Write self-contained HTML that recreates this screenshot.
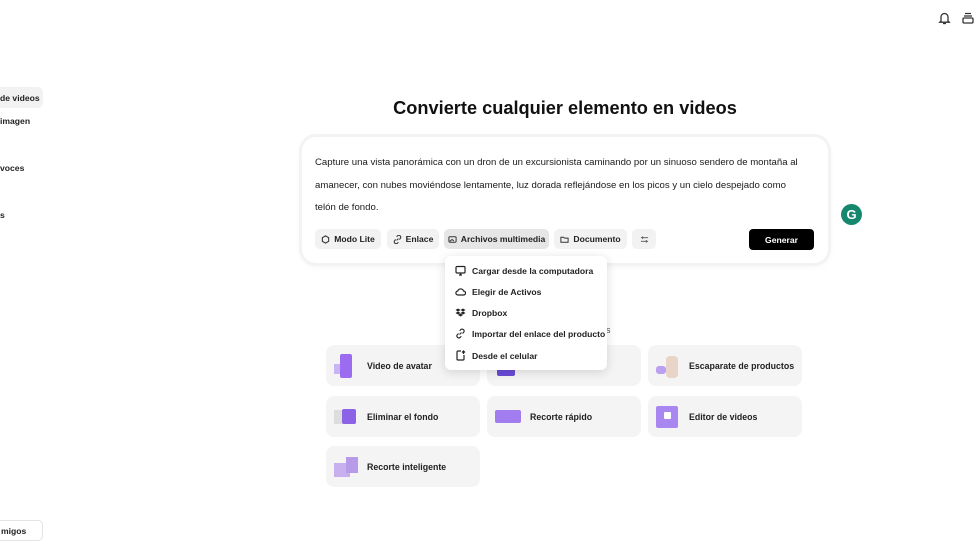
<!DOCTYPE html>
<html><head><meta charset="utf-8"><style>
*{margin:0;padding:0;box-sizing:border-box}
body{width:980px;height:552px;overflow:hidden;background:#fff;font-family:"Liberation Sans",sans-serif;color:#111;position:relative}
.abs{position:absolute}
.b{font-weight:bold}
.t9{font-size:9px}
.card{left:302px;top:137px;width:526px;height:126px;border-radius:14px;background:#fff;box-shadow:0 0 0 3px #f3f3f3,0 2px 8px rgba(0,0,0,.07)}
.ptext{left:315px;top:152px;width:492px;font-size:9.6px;line-height:22.6px;color:#1a1a1a}
.btn{top:229px;height:20px;border-radius:5px;background:#f2f2f2;font-size:8.6px;font-weight:bold;display:flex;align-items:center;justify-content:center;gap:4px;color:#222}
.btn svg{width:9px;height:9px}
.gen{left:749px;top:229px;width:65px;height:21px;background:#000;color:#fff;border-radius:4px;font-size:8.6px;font-weight:bold;display:flex;align-items:center;justify-content:center}
.dd{left:445px;top:256px;width:162px;height:114px;background:#fff;border-radius:6px;box-shadow:0 2px 10px rgba(0,0,0,.14)}
.it{left:455px;font-size:8.6px;font-weight:bold;display:flex;align-items:center;gap:6px;color:#222}
.it svg{width:11px;height:11px}
.tile{width:154px;height:41px;background:#f4f4f4;border-radius:8px;display:flex;align-items:center;font-size:8.8px;font-weight:bold;color:#222}
.th{width:24px;height:24px;margin:0 9px 0 8px;position:relative}
.side{font-size:8.6px;font-weight:bold;color:#222}
</style></head><body>
<div class="abs side" style="left:-6px;top:87px;width:49px;height:21px;background:#f2f2f2;border-radius:5px;padding:6px 0 0 6px">de videos</div>
<div class="abs side" style="left:0;top:116px">imagen</div>
<div class="abs side" style="left:0;top:163px">voces</div>
<div class="abs side" style="left:0;top:210px">s</div>
<div class="abs side" style="left:-6px;top:520px;width:49px;height:21px;border:1px solid #e3e3e3;border-radius:5px;padding:5px 0 0 6px">migos</div>
<svg class="abs" style="left:938px;top:11px" width="13" height="14" viewBox="0 0 13 14" fill="none" stroke="#333" stroke-width="1.3"><path d="M3 10V6a3.5 3.5 0 0 1 7 0v4l1.2 1.2H1.8z"/><path d="M5 12.5h3"/></svg>
<svg class="abs" style="left:962px;top:12px" width="12" height="12" viewBox="0 0 12 12" fill="none" stroke="#333" stroke-width="1.3"><path d="M3 1.5h6M2 4h8"/><rect x="1" y="6" width="10" height="5" rx="1"/></svg>
<div class="abs" style="left:841px;top:204px;width:21px;height:21px;border-radius:50%;background:#15876f;color:#fff;font-weight:bold;font-size:13px;text-align:center;line-height:21px">G</div>
<div class="abs b" style="left:0;width:1130px;top:98px;text-align:center;font-size:18.2px;color:#111">Convierte cualquier elemento en videos</div>
<div class="abs card"></div>
<div class="abs ptext">Capture una vista panorámica con un dron de un excursionista caminando por un sinuoso sendero de montaña al amanecer, con nubes moviéndose lentamente, luz dorada reflejándose en los picos y un cielo despejado como telón de fondo.</div>
<div class="abs btn" style="left:315px;width:66px"><svg viewBox="0 0 10 10" fill="none" stroke="#333" stroke-width="1.2"><path d="M5 1l3.5 2v4L5 9 1.5 7V3z"/></svg>Modo Lite</div>
<div class="abs btn" style="left:387px;width:52px"><svg viewBox="0 0 10 10" fill="none" stroke="#333" stroke-width="1.2"><path d="M4 6l2-2M3 5L2 6a2 2 0 0 0 3 3l1-1M7 5l1-1a2 2 0 0 0-3-3L4 2"/></svg>Enlace</div>
<div class="abs btn" style="left:444px;width:105px;background:#e6e6e6"><svg viewBox="0 0 10 10" fill="none" stroke="#333" stroke-width="1.1"><rect x="1" y="2" width="8" height="6" rx="1"/><path d="M2 7l2.5-2 2 1.5"/></svg>Archivos multimedia</div>
<div class="abs btn" style="left:554px;width:73px"><svg viewBox="0 0 10 10" fill="none" stroke="#333" stroke-width="1.1"><path d="M1 2.5h3l1 1h4v4.5H1z"/></svg>Documento</div>
<div class="abs btn" style="left:632px;width:24px"><svg viewBox="0 0 10 10" fill="none" stroke="#555" stroke-width="1"><path d="M1 3h8M1 7h8M3 1.5v3M7 5.5v3"/></svg></div>
<div class="abs gen">Generar</div>
<div class="abs t9" style="left:606px;top:325px;color:#555">s</div>
<div class="abs tile" style="left:326px;top:345px"><div class="th"><div class="abs" style="left:6px;top:0;width:12px;height:24px;background:#9b6cf0;border-radius:2px"></div><div class="abs" style="left:0;top:10px;width:6px;height:10px;background:#c9b4f5"></div></div>Video de avatar</div>
<div class="abs tile" style="left:487px;top:345px"><div class="th"><div class="abs" style="left:2px;top:14px;width:18px;height:8px;background:#6a4bd8;border-radius:2px"></div></div></div>
<div class="abs tile" style="left:648px;top:345px"><div class="th"><div class="abs" style="left:10px;top:2px;width:12px;height:22px;background:#e8d5c8;border-radius:4px"></div><div class="abs" style="left:0;top:12px;width:10px;height:8px;background:#b9a0f0;border-radius:3px"></div></div>Escaparate de productos</div>
<div class="abs tile" style="left:326px;top:396px"><div class="th"><div class="abs" style="left:0;top:5px;width:22px;height:14px;background:#ddd"></div><div class="abs" style="left:8px;top:4px;width:14px;height:15px;background:#8c62e6;border-radius:2px"></div></div>Eliminar el fondo</div>
<div class="abs tile" style="left:487px;top:396px"><div class="th" style="width:26px"><div class="abs" style="left:0;top:5px;width:26px;height:13px;background:#a27df0;border-radius:2px"></div></div>Recorte rápido</div>
<div class="abs tile" style="left:648px;top:396px"><div class="th"><div class="abs" style="left:0;top:1px;width:22px;height:22px;background:#a888f0;border-radius:2px"></div><div class="abs" style="left:8px;top:7px;width:7px;height:7px;background:#fff;border-radius:1px"></div></div>Editor de videos</div>
<div class="abs tile" style="left:326px;top:446px"><div class="th"><div class="abs" style="left:0;top:8px;width:16px;height:14px;background:#c8b0ee"></div><div class="abs" style="left:12px;top:2px;width:12px;height:16px;background:#b79ae8"></div></div>Recorte inteligente</div>
<div class="abs dd"></div>
<div class="abs it" style="top:265px"><svg viewBox="0 0 11 11" fill="none" stroke="#222" stroke-width="1.2"><rect x="1" y="1.5" width="9" height="6.5" rx="1"/><path d="M4 10h3M5.5 8v2"/></svg>Cargar desde la computadora</div>
<div class="abs it" style="top:286px"><svg viewBox="0 0 11 11" fill="none" stroke="#222" stroke-width="1.2"><path d="M3 9h5.5a2 2 0 0 0 0-4 3 3 0 0 0-5.7 0A2 2 0 0 0 3 9z"/></svg>Elegir de Activos</div>
<div class="abs it" style="top:307px"><svg viewBox="0 0 11 11" fill="#222"><path d="M3 1.5L5.5 3 3 4.5.5 3zM8 1.5L10.5 3 8 4.5 5.5 3zM3 4.5L5.5 6 3 7.5.5 6zM8 4.5l2.5 1.5L8 7.5 5.5 6zM3 8l2.5-1.5L8 8 5.5 9.5z"/></svg>Dropbox</div>
<div class="abs it" style="top:328px"><svg viewBox="0 0 11 11" fill="none" stroke="#222" stroke-width="1.1"><path d="M4.5 6.5l2-2M3.5 5.5L2.3 6.7a2 2 0 0 0 2.8 2.8l1.2-1.2M7.5 5.5l1.2-1.2a2 2 0 0 0-2.8-2.8L4.7 2.7"/></svg>Importar del enlace del producto</div>
<div class="abs it" style="top:350px"><svg viewBox="0 0 11 11" fill="none" stroke="#222" stroke-width="1.2"><path d="M6 1H3a1 1 0 0 0-1 1v7a1 1 0 0 0 1 1h5a1 1 0 0 0 1-1V5M8.5 1v3M7 2.5l1.5-1.5L10 2.5"/></svg>Desde el celular</div>
</body></html>
